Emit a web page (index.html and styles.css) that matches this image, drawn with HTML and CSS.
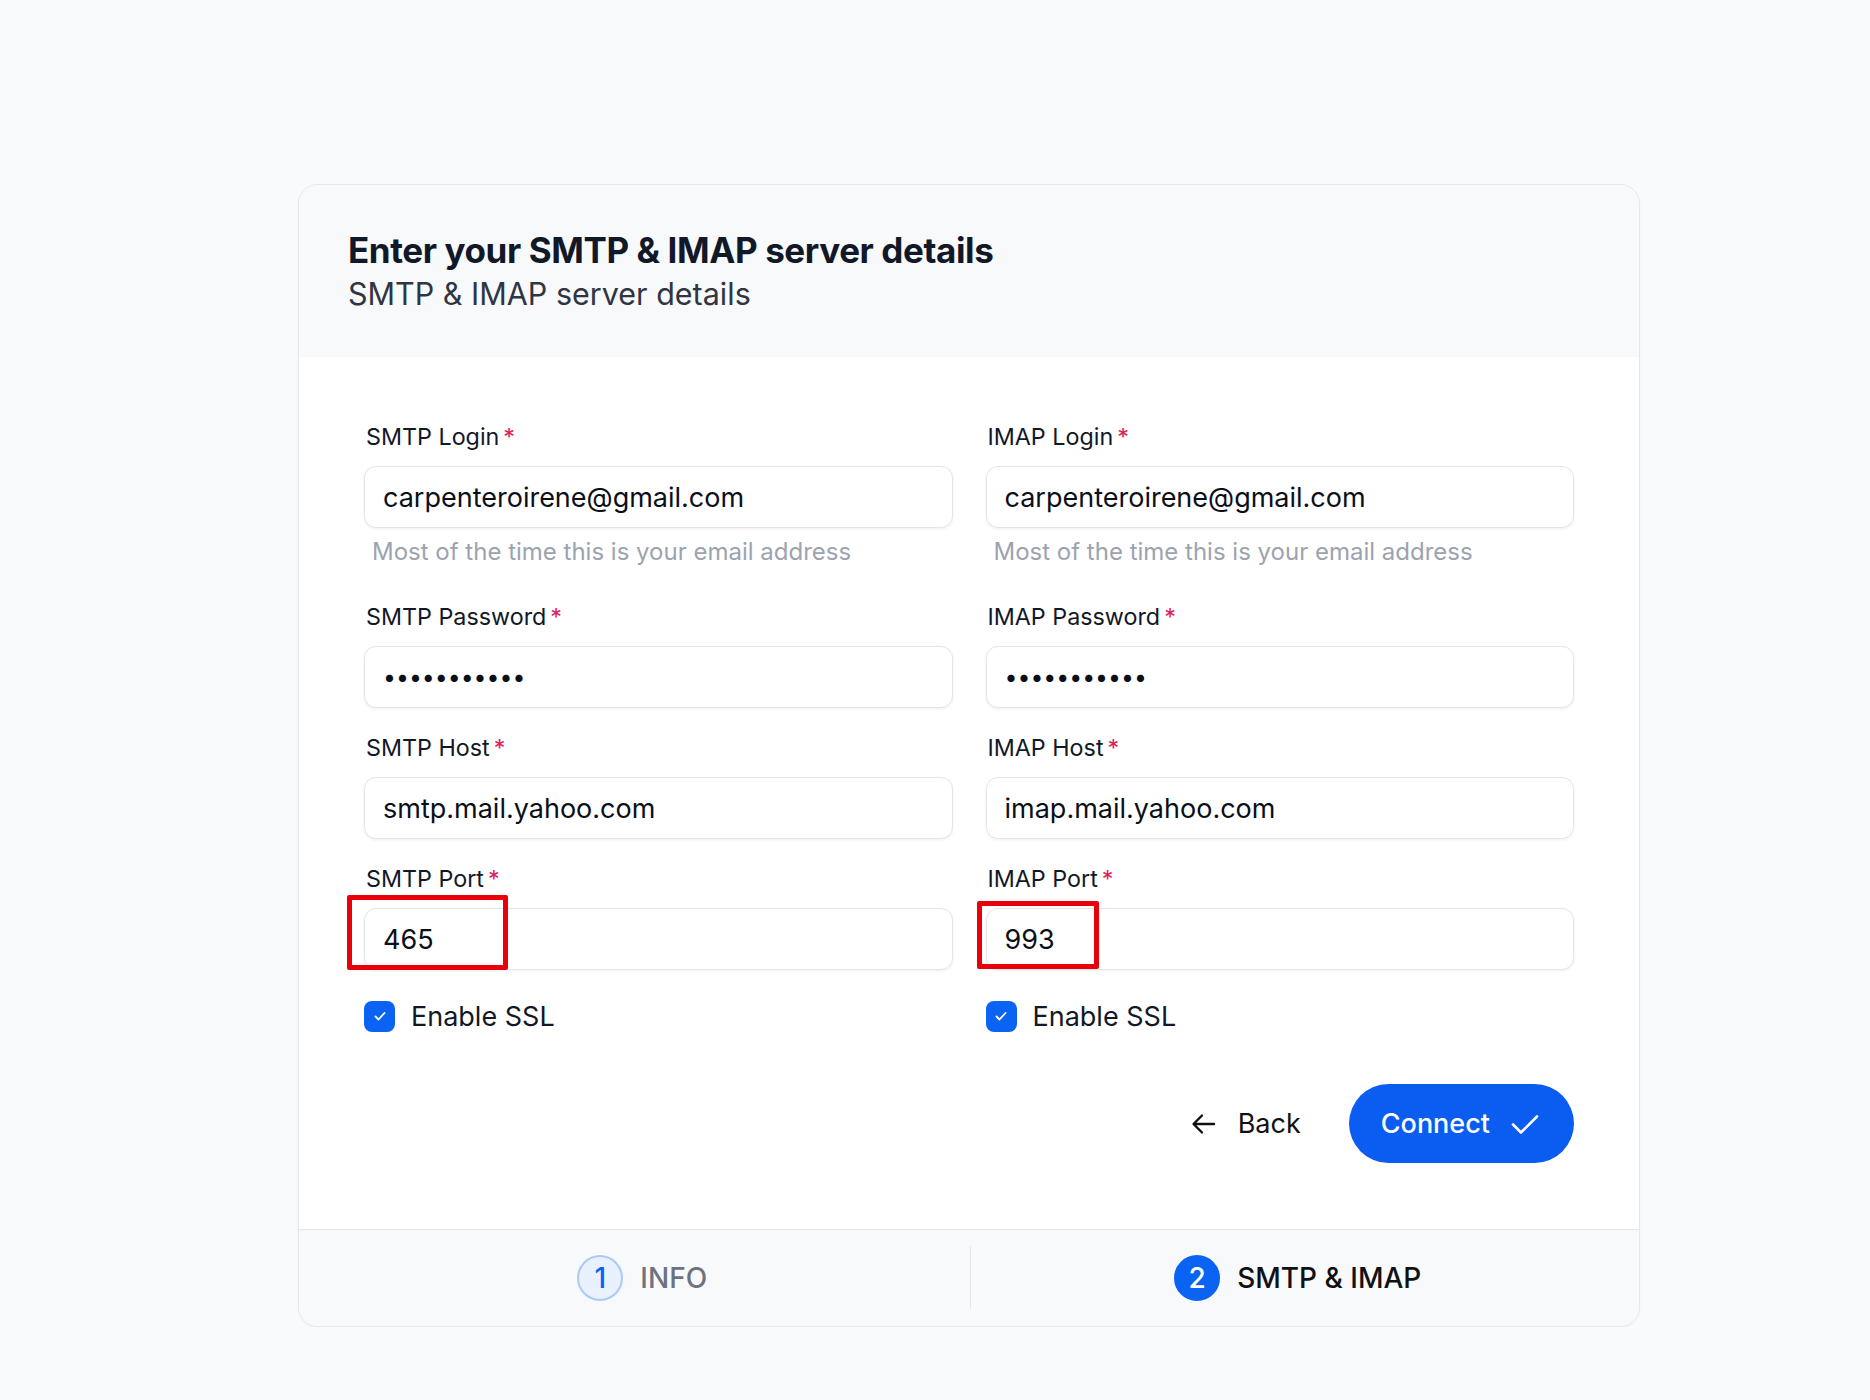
FILE: index.html
```html
<!DOCTYPE html>
<html lang="en">
<head>
    <meta charset="UTF-8">
    <meta name="viewport" content="width=device-width, initial-scale=1.0">
    <title>SMTP &amp; IMAP</title>
    <link rel="stylesheet" href="styles.css">
</head>
<body>
    <div class="card">
        <div class="card-head">
            <h1>Enter your SMTP &amp; IMAP server details</h1>
            <p>SMTP &amp; IMAP server details</p>
        </div>

        <form class="card-body">
            <div class="fields">
                <div class="field">
                    <label for="smtp-login">SMTP Login<span class="req">*</span></label>
                    <input type="text" id="smtp-login" value="carpenteroirene@gmail.com" readonly />
                    <div class="hint">Most of the time this is your email address</div>
                </div>
                <div class="field">
                    <label for="imap-login">IMAP Login<span class="req">*</span></label>
                    <input type="text" id="imap-login" value="carpenteroirene@gmail.com" readonly />
                    <div class="hint">Most of the time this is your email address</div>
                </div>

                <div class="field">
                    <label for="smtp-pass">SMTP Password<span class="req">*</span></label>
                    <input type="password" id="smtp-pass" class="pass" value="secretpass1" readonly />
                </div>
                <div class="field">
                    <label for="imap-pass">IMAP Password<span class="req">*</span></label>
                    <input type="password" id="imap-pass" class="pass" value="secretpass1" readonly />
                </div>

                <div class="field">
                    <label for="smtp-host">SMTP Host<span class="req">*</span></label>
                    <input type="text" id="smtp-host" value="smtp.mail.yahoo.com" readonly />
                </div>
                <div class="field">
                    <label for="imap-host">IMAP Host<span class="req">*</span></label>
                    <input type="text" id="imap-host" value="imap.mail.yahoo.com" readonly />
                </div>

                <div class="field">
                    <label for="smtp-port">SMTP Port<span class="req">*</span></label>
                    <div class="control">
                        <input type="text" id="smtp-port" value="465" readonly />
                        <span class="mark mark-smtp"></span>
                    </div>
                </div>
                <div class="field">
                    <label for="imap-port">IMAP Port<span class="req">*</span></label>
                    <div class="control">
                        <input type="text" id="imap-port" value="993" readonly />
                        <span class="mark mark-imap"></span>
                    </div>
                </div>

                <label class="check">
                    <span class="box">
                        <svg width="16" height="16" viewBox="0 0 16 16"><path d="M3.5 8.5l3 3 6-6.5" fill="none" stroke="#fff" stroke-width="1.8" stroke-linecap="round" stroke-linejoin="round"/></svg>
                    </span>
                    Enable SSL
                </label>
                <label class="check">
                    <span class="box">
                        <svg width="16" height="16" viewBox="0 0 16 16"><path d="M3.5 8.5l3 3 6-6.5" fill="none" stroke="#fff" stroke-width="1.8" stroke-linecap="round" stroke-linejoin="round"/></svg>
                    </span>
                    Enable SSL
                </label>
            </div>

            <div class="actions">
                <button type="button" class="btn-back">
                    <svg width="28" height="28" viewBox="0 0 28 28"><path d="M24 14H4M12 5.5L3.5 14l8.5 8.5" fill="none" stroke="#111" stroke-width="2.4" stroke-linecap="round" stroke-linejoin="round"/></svg>
                    Back
                </button>
                <button type="button" class="btn-connect">
                    Connect
                    <svg width="30" height="30" viewBox="0 0 30 30"><path d="M3 15.5l8 8L27 7.5" fill="none" stroke="#fff" stroke-width="2.6" stroke-linecap="round" stroke-linejoin="round"/></svg>
                </button>
            </div>
        </form>

        <div class="steps">
            <div class="step">
                <span class="num">1</span>
                <span class="step-name">INFO</span>
            </div>
            <div class="step step-active">
                <span class="num">2</span>
                <span class="step-name">SMTP &amp; IMAP</span>
            </div>
        </div>
    </div>
</body>
</html>
```

FILE: styles.css
```css
body {
    margin: 0;
    background-color: #f9fafb;
    font-family: Inter, "Noto Sans", sans-serif;
    color: #111827;
}
.card {
    width: 1342px;
    box-sizing: border-box;
    margin: 184px 0 0 298px;
    background-color: #fff;
    border: 1px solid #e5e7eb;
    border-radius: 20px;
    box-shadow: 0 1px 3px rgba(17, 24, 39, 0.04);
    overflow: hidden;
}

/* header */
.card-head {
    background-color: #f8f9fb;
    padding: 43px 49px 41px;
}
.card-head h1 {
    margin: 0;
    font-size: 35px;
    line-height: 44px;
    font-weight: 700;
    letter-spacing: -0.4px;
    color: #111827;
}
.card-head p {
    margin: 0;
    font-size: 30.5px;
    line-height: 44px;
    color: #2f3542;
}

/* form */
.card-body {
    padding: 65px 65px 66px;
}
.fields {
    display: grid;
    grid-template-columns: 1fr 1fr;
    column-gap: 33px;
    row-gap: 25px;
}
.field label {
    display: block;
    font-size: 23.3px;
    line-height: 30px;
    margin: 0 0 14px 2px;
    color: #111827;
}
.req {
    color: #e11d5a;
    margin-left: 4px;
}
.field input {
    display: block;
    width: 100%;
    height: 62px;
    box-sizing: border-box;
    padding: 0 18px;
    font-family: inherit;
    font-size: 27px;
    color: #0b0f19;
    background-color: #fff;
    border: 1px solid #e3e5e9;
    border-radius: 12px;
    box-shadow: 0 1px 3px rgba(17, 24, 39, 0.07);
    outline: none;
}
.field input.pass {
    font-size: 23px;
    letter-spacing: 0;
}
.hint {
    margin: 9px 0 10px 8px;
    font-size: 24px;
    line-height: 30px;
    color: #9ca3af;
}
.control {
    position: relative;
}

/* red annotation boxes */
.mark {
    position: absolute;
    border: 5px solid #e8000b;
    border-radius: 2px;
    box-sizing: border-box;
}
.mark-smtp {
    left: -17px;
    top: -13px;
    width: 161px;
    height: 75px;
}
.mark-imap {
    left: -9px;
    top: -7px;
    width: 122px;
    height: 68px;
}

.check {
    display: flex;
    align-items: center;
    height: 42px;
    font-size: 27px;
    color: #111827;
}
.box {
    display: flex;
    align-items: center;
    justify-content: center;
    width: 31px;
    height: 31px;
    margin-right: 16px;
    border-radius: 8px;
    background-color: #0b63f3;
}

/* buttons */
.actions {
    display: flex;
    justify-content: flex-end;
    align-items: center;
    gap: 48px;
    margin-top: 47px;
}
.actions button {
    display: flex;
    align-items: center;
    font-family: inherit;
    font-size: 27px;
    border: none;
    cursor: pointer;
}
.btn-back {
    gap: 20px;
    padding: 0;
    background: none;
    color: #111;
}
.btn-connect {
    gap: 20px;
    height: 79px;
    padding: 0 34px 0 32px;
    border-radius: 40px;
    background-color: #0a5df0;
    color: #fff;
    font-weight: 500;
}

/* step footer */
.steps {
    display: flex;
    background-color: #f8f9fb;
    border-top: 1px solid #e5e7eb;
    padding: 16px 0 17px;
}
.step {
    flex: 1;
    display: flex;
    align-items: center;
    justify-content: center;
    gap: 17px;
    height: 63px;
}
.step:first-child {
    padding-left: 16px;
}
.step:last-child {
    padding-right: 14px;
}
.step + .step {
    border-left: 1px solid #e5e7eb;
}
.num {
    display: flex;
    align-items: center;
    justify-content: center;
    width: 46px;
    height: 46px;
    box-sizing: border-box;
    border-radius: 50%;
    font-size: 28px;
    font-weight: 500;
    background-color: #e8f1fd;
    border: 2px solid #a9cbf5;
    color: #0b63f3;
}
.step-name {
    font-size: 28px;
    font-weight: 500;
    color: #6b7280;
}
.step-active .num {
    background-color: #0b63f3;
    border-color: #0b63f3;
    color: #fff;
}
.step-active .step-name {
    color: #111;
}
```
